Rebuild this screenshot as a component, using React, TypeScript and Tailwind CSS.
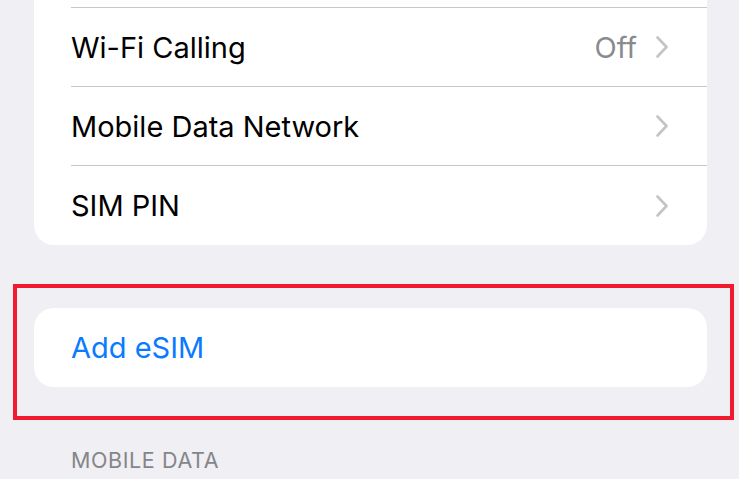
interface RowProps {
  label: string
  value?: string
  last?: boolean
}

function Chevron(): JSX.Element {
  return (
    <svg width="12" height="22" viewBox="0 0 12 22" fill="none" className="shrink-0">
      <polyline points="1.5,1.5 10.5,11 1.5,20.5" stroke="#c4c4c7" strokeWidth="2.6" strokeLinecap="round" strokeLinejoin="round" />
    </svg>
  )
}

function Row({ label, value, last }: RowProps): JSX.Element {
  return (
    <div className="flex h-[79px] items-stretch pl-[37px]">
      <div className={`flex flex-1 items-center pr-[39px] ${last ? '' : 'border-b border-[#c8c8cc]'}`}>
        <span className="flex-1 text-[29px] leading-none text-black">{label}</span>
        {value && <span className="mr-[19px] text-[29px] leading-none text-[#8a8a8e]">{value}</span>}
        <Chevron />
      </div>
    </div>
  )
}

export default function App(): JSX.Element {
  return (
    <div className="relative h-[479px] w-[739px] overflow-hidden bg-[#f0eff4] font-['Inter',sans-serif]">
      <div className="ml-[34px] mr-[32px] overflow-hidden rounded-b-[20px] bg-white">
        <div className="h-[8px] pl-[37px]">
          <div className="h-full border-b border-[#c8c8cc]" />
        </div>
        <Row label="Wi-Fi Calling" value="Off" />
        <Row label="Mobile Data Network" />
        <Row label="SIM PIN" last />
      </div>

      <div className="ml-[34px] mr-[32px] mt-[63px] flex h-[79px] items-center rounded-[20px] bg-white pl-[37px]">
        <span className="text-[29px] leading-none text-[#0a7aff]">Add eSIM</span>
      </div>

      <div className="mt-[60px] pl-[71px] text-[21.5px] leading-[26px] uppercase tracking-[0.6px] text-[#85858a]">Mobile Data</div>

      <div className="absolute left-[13px] top-[284px] h-[136px] w-[721px] border-[4px] border-[#f11a2e]" />
    </div>
  )
}
